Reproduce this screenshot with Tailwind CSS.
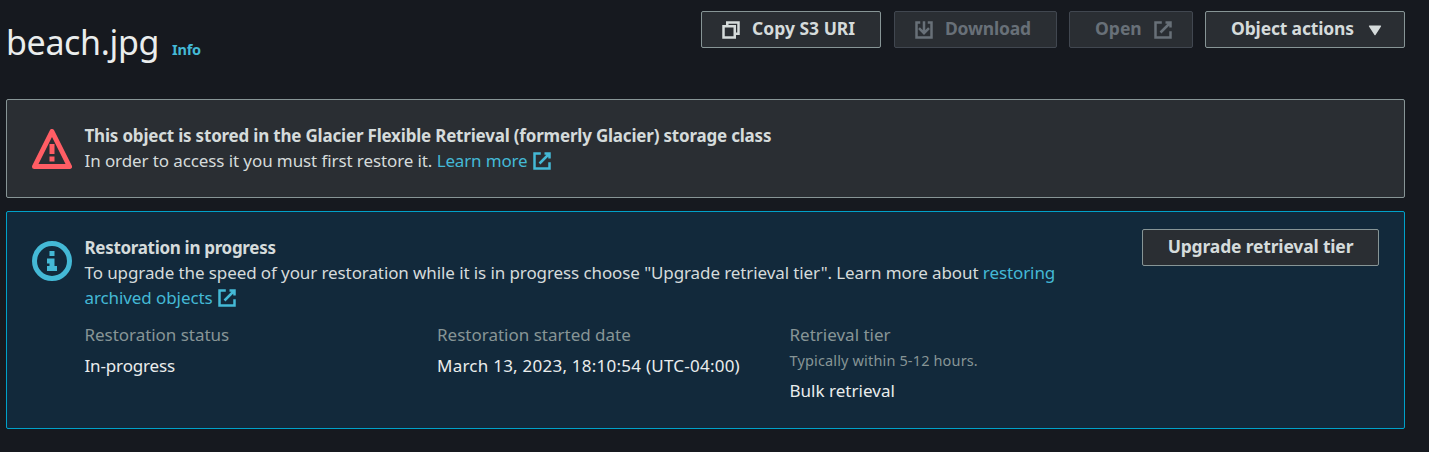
<!DOCTYPE html>
<html lang="en">
<head>
<meta charset="utf-8">
<title>beach.jpg</title>
<script src="https://cdn.jsdelivr.net/npm/@tailwindcss/browser@4"></script>
</head>
<body class="h-[452px] overflow-hidden bg-[#16191f] pl-[6px] pr-[24px] text-[#d5dbdb] font-['Noto_Sans',sans-serif] text-[17px] leading-[25px]">
<svg class="hidden">
  <symbol id="external" viewBox="0 0 16 16" fill="none" stroke="currentColor" stroke-width="2">
    <path d="M10 2h4v4M6 10l8-8M14 9.05V14H2V2h5.04" stroke-linejoin="miter"/>
  </symbol>
</svg>
<header class="flex h-[99px] items-start justify-between">
  <div class="flex items-baseline pt-[19px]">
    <h1 class="text-[34px] leading-[46px] tracking-[-0.35px] text-[#eaeded]">beach.jpg</h1>
    <a class="ml-[13px] text-[14.5px] font-bold tracking-[-0.2px] text-[#44b9d6]">Info</a>
  </div>
  <div class="flex pt-[11px] text-[17.5px] font-bold">
    <button class="flex h-[37px] w-[180px] items-center rounded-[2px] border border-[#879596] bg-[#2a2e33] pl-[19px]">
      <svg class="h-5 w-5" viewBox="0 0 16 16" fill="none" stroke="currentColor" stroke-width="2"><path d="M2 5h9v9H2zM5 5V2h9v9h-3"/></svg>
      <span class="ml-[11px] whitespace-nowrap pb-[2px]">Copy S3 URI</span>
    </button>
    <button class="ml-[13px] flex h-[37px] w-[163px] items-center rounded-[2px] border border-[#414750] bg-[#2a2e33] pl-[19px] text-[#687078]">
      <svg class="h-5 w-5" viewBox="0 0 16 16" fill="none" stroke="currentColor" stroke-width="2"><path d="M5 2H2v12h12V2h-3M8 1v9M4 6.5l4 4 4-4"/></svg>
      <span class="ml-[11px] whitespace-nowrap pb-[2px] tracking-[-0.2px]">Download</span>
    </button>
    <button class="ml-[12px] flex h-[37px] w-[124px] items-center rounded-[2px] border border-[#414750] bg-[#2a2e33] pl-[25px] text-[#687078]">
      <span class="whitespace-nowrap pb-[2px]">Open</span>
      <svg class="ml-[11px] h-5 w-5"><use href="#external"/></svg>
    </button>
    <button class="ml-[12px] flex h-[37px] w-[200px] items-center rounded-[2px] border border-[#879596] bg-[#2a2e33] pl-[25px]">
      <span class="whitespace-nowrap pb-[2px] tracking-[-0.16px]">Object actions</span>
      <svg class="ml-[11px] h-5 w-5" viewBox="0 0 16 16" fill="currentColor"><path d="M3.6 4.4h8.8a.5.5 0 0 1 .4.8L8.4 11.9a.5.5 0 0 1-.8 0L3.2 5.2a.5.5 0 0 1 .4-.8z"/></svg>
    </button>
  </div>
</header>

<section class="flex h-[99px] rounded-[2px] border border-[#879596] bg-[#2a2e33] pl-[25px] pt-[23px]">
  <svg class="mt-[6px] h-10 w-10 text-[#ff5d64]" viewBox="0 0 16 16" fill="none" stroke="currentColor" stroke-width="2" stroke-linejoin="round"><path d="M8 1l7 14H1z"/><path d="M8 6v4M8 11v2"/></svg>
  <div class="ml-[12.5px] whitespace-nowrap">
    <h2 class="text-[17px] font-bold tracking-[-0.198px]">This object is stored in the Glacier Flexible Retrieval (formerly Glacier) storage class</h2>
    <p class="flex"><span class="whitespace-pre tracking-[-0.1px]">In order to access it you must first restore it. </span><a class="flex items-center tracking-[-0.16px] text-[#44b9d6]">Learn more<svg class="ml-[4.5px] h-5 w-5"><use href="#external"/></svg></a></p>
  </div>
</section>

<section class="mt-[13px] flex h-[218px] rounded-[2px] border border-[#00a1c9] bg-[#12293b] pl-[25px] pt-[23px]">
  <svg class="mt-[6px] h-10 w-10 text-[#44b9d6]" viewBox="0 0 16 16" fill="none" stroke="currentColor" stroke-width="2"><circle cx="8" cy="8" r="7"/><path d="M8 11V8H6M10 11H6M8 6V4"/></svg>
  <div class="ml-[12.5px] w-[1057.5px]">
    <h2 class="text-[17px] font-bold tracking-[-0.31px]">Restoration in progress</h2>
    <p class="whitespace-nowrap tracking-[-0.098px]">To upgrade the speed of your restoration while it is in progress choose "Upgrade retrieval tier". Learn more about <a class="text-[#44b9d6]">restoring</a></p>
    <a class="flex items-center tracking-[-0.09px] text-[#44b9d6]">archived objects<svg class="ml-[4.5px] h-5 w-5"><use href="#external"/></svg></a>
    <dl class="mt-[12px] grid grid-cols-[352.5px_352.5px_1fr] whitespace-nowrap text-[#eaeded]">
      <div><dt class="tracking-[-0.04px] text-[#879596]">Restoration status</dt><dd class="mt-[6px] tracking-[-0.15px]">In-progress</dd></div>
      <div><dt class="text-[#879596]">Restoration started date</dt><dd class="mt-[6px] tracking-[0.24px]">March 13, 2023, 18:10:54 (UTC-04:00)</dd></div>
      <div><dt class="text-[#879596]">Retrieval tier</dt><dd class="mt-[1px] text-[14.5px] tracking-[0.15px] text-[#879596]">Typically within 5-12 hours.</dd><dd class="mt-[5px] tracking-[0.02px]">Bulk retrieval</dd></div>
    </dl>
  </div>
  <button class="mt-[-6px] flex h-[37px] w-[237px] items-center justify-center rounded-[2px] border border-[#879596] bg-[#2a2e33] pb-[2px] text-[17.5px] font-bold tracking-[-0.17px]">Upgrade retrieval tier</button>
</section>
</body>
</html>
